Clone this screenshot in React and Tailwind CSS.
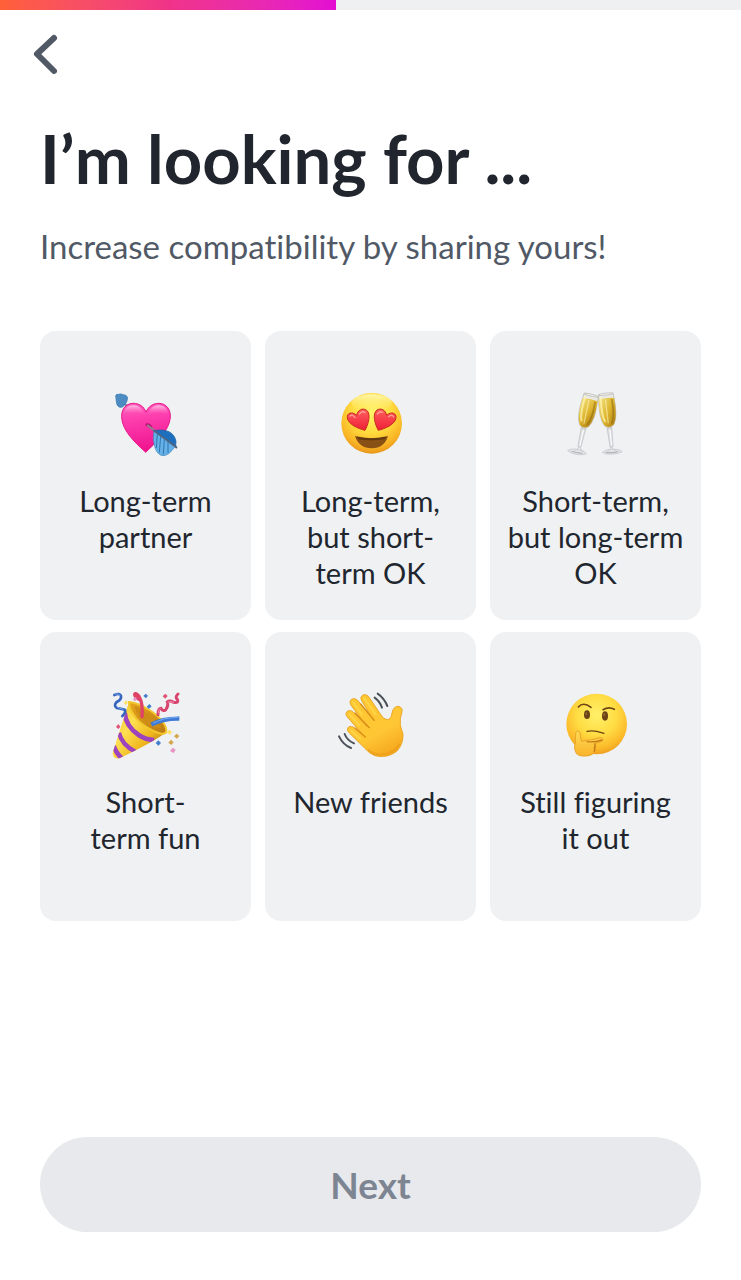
import { useState } from "react";

function HeartArrow() {
  return (
    <svg viewBox="4 0 270 270" className="size-[90px]" aria-hidden="true">
      <defs>
        <linearGradient id="ha-heart" x1="0" y1="0" x2="0.15" y2="1">
          <stop offset="0" stopColor="#ff62bd" />
          <stop offset="0.35" stopColor="#fd3fae" />
          <stop offset="1" stopColor="#f0148f" />
        </linearGradient>
        <linearGradient id="ha-shine" x1="0" y1="0" x2="0" y2="1">
          <stop offset="0" stopColor="#ffc4e6" stopOpacity="0.95" />
          <stop offset="1" stopColor="#ff5dbb" stopOpacity="0" />
        </linearGradient>
      </defs>
      <path d="M70 70 L86 84" stroke="#7d8797" strokeWidth="6" />
      <path d="M48 50 Q49 45 56 46 Q64 43 71 47 Q81 47 84 56 Q83 68 76 77 Q68 87 60 85 Q50 80 50 68 Z" fill="#4c8cc2" stroke="#3474ac" strokeWidth="2" />
      <path d="M138 220 C116 199 66 158 66 112 C66 84 84 73 101 73 C119 73 133 83 139 99 C146 83 160 73 177 73 C199 73 213 90 212 114 C210 156 164 195 138 220 Z" fill="url(#ha-heart)" stroke="#e81688" strokeWidth="3" />
      <path d="M73 108 C72 88 86 79 101 79 C117 79 128 89 134 106 Q104 92 73 108 Z M145 106 C151 88 162 79 177 79 C194 79 206 91 205 108 Q176 92 145 106 Z" fill="url(#ha-shine)" />
      <path d="M138 134 Q149 128 159 145 L151 149 Q148 139 138 141 Z" fill="#b30c6c" />
      <path d="M144 139 L230 205" stroke="#9a7991" strokeWidth="6" strokeLinecap="round" />
      <path d="M164 155 Q190 150 208 158 Q226 168 229 187 L228 202 Z" fill="#1e6fbd" stroke="#195d9f" strokeWidth="2" />
      <path d="M163 157 Q158 178 164 199 Q169 222 184 229 Q195 233 207 224 Q219 214 225 204 Z" fill="#65b1e8" stroke="#3e86bd" strokeWidth="2" />
      <path d="M173 165 L170 207 M183 172 L179 221 M194 180 L191 226 M205 188 L205 221" stroke="#2f77b1" strokeWidth="3" />
      <path d="M162 154 L226 201 L230 205" fill="none" stroke="#4b6684" strokeWidth="5" strokeLinecap="round" />
    </svg>
  );
}

function HeartEyes() {
  return (
    <svg viewBox="4 0 270 270" className="size-[90px]" aria-hidden="true">
      <defs>
        <radialGradient id="he-face" cx="0.5" cy="0.32" r="0.68">
          <stop offset="0" stopColor="#fff56a" />
          <stop offset="0.5" stopColor="#ffdb3e" />
          <stop offset="0.83" stopColor="#f9b425" />
          <stop offset="1" stopColor="#e8961a" />
        </radialGradient>
        <linearGradient id="he-heart" x1="0" y1="0" x2="0" y2="1">
          <stop offset="0" stopColor="#ff5f5c" />
          <stop offset="1" stopColor="#ee1f37" />
        </linearGradient>
        <linearGradient id="he-top" x1="0" y1="0" x2="0" y2="1">
          <stop offset="0" stopColor="#fff8b4" stopOpacity="0.9" />
          <stop offset="1" stopColor="#fff176" stopOpacity="0" />
        </linearGradient>
      </defs>
      <circle cx="141" cy="133" r="91" fill="url(#he-face)" />
      <ellipse cx="141" cy="72" rx="60" ry="26" fill="url(#he-top)" />
      <path d="M121 154 C100 149 71 136 68 117 C66 102 82 96 96 109 C99 93 113 86 125 93 C141 105 130 138 121 154 Z" fill="url(#he-heart)" stroke="#c92a1e" strokeWidth="3" />
      <path d="M161 154 C182 149 211 136 214 117 C216 102 200 96 186 109 C183 93 169 86 157 93 C141 105 152 138 161 154 Z" fill="url(#he-heart)" stroke="#c92a1e" strokeWidth="3" />
      <path d="M76 111 Q84 105 91 116 M104 105 Q113 94 121 101 M158 105 Q166 95 174 100 M192 113 Q202 105 207 114" fill="none" stroke="#ff9f92" strokeWidth="4" strokeLinecap="round" />
      <path d="M91 171 Q141 184 190 171 Q180 207 141 208 Q102 207 91 171 Z" fill="#885014" />
      <path d="M97 173 Q141 183 184 173 L181 180 Q141 187 101 181 Z" fill="#61380f" />
    </svg>
  );
}

function Flute({ transform }) {
  return (
    <g transform={transform}>
      <path d="M-22 -51 Q-30 20 -14 43 Q0 58 14 43 Q30 20 22 -51 Z" fill="#e8e9e5" stroke="#b9b7ae" strokeWidth="2" />
      <path d="M-23 -37 Q0 -41 23 -37 Q28 22 13 43 Q0 54 -13 43 Q-28 22 -23 -37 Z" fill="url(#fl-wine)" />
      <path d="M-16 -44 Q-21 12 -10 32" fill="none" stroke="#fff6b4" strokeWidth="6" opacity="0.7" />
      <path d="M16 -34 Q20 15 8 39" fill="none" stroke="#8b6810" strokeWidth="5" opacity="0.55" />
      <path d="M-3 -35 L-2 37" stroke="#fff9bb" strokeWidth="4" opacity="0.55" />
      <ellipse cx="0" cy="-51" rx="22" ry="3" fill="#f3f3ef" stroke="#b5b4ae" strokeWidth="2" />
      <path d="M-7 51 Q0 55 7 51 L5 108 L-4 108 Z" fill="#dfe1e3" stroke="#bcbec1" strokeWidth="2" />
      <path d="M1 56 L1 105" stroke="#fff" strokeWidth="3" />
    </g>
  );
}

function Glasses() {
  return (
    <svg viewBox="4 0 270 270" className="size-[90px]" aria-hidden="true">
      <defs>
        <linearGradient id="fl-wine" x1="0" y1="0" x2="1" y2="1">
          <stop offset="0" stopColor="#f3e283" />
          <stop offset="0.5" stopColor="#dfb62f" />
          <stop offset="1" stopColor="#a7740d" />
        </linearGradient>
      </defs>
      <path d="M54 214 Q65 207 86 211 Q109 217 110 225 Q98 230 78 226 Q57 221 54 214 Z" fill="#e1e3e5" stroke="#c3c5c8" strokeWidth="2" />
      <path d="M158 220 Q169 211 185 211 Q210 209 218 218 Q207 225 184 226 Q163 226 158 220 Z" fill="#e1e3e5" stroke="#c3c5c8" strokeWidth="2" />
      <path d="M66 217 Q80 222 98 223 M168 221 Q187 223 206 218" fill="none" stroke="#a9acaf" strokeWidth="3" />
      <Flute transform="translate(113 98) rotate(13)" />
      <Flute transform="translate(174 96) rotate(-6)" />
      <path d="M76 214 Q84 212 90 202 Q92 212 101 219 M174 217 Q183 211 184 203 Q189 213 200 214" fill="none" stroke="#c9cbce" strokeWidth="3" />
    </svg>
  );
}

function Popper() {
  return (
    <svg viewBox="4 0 270 270" className="size-[90px]" aria-hidden="true">
      <defs>
        <linearGradient id="pp-cone" x1="0" y1="0" x2="1" y2="0.8">
          <stop offset="0" stopColor="#eab51a" />
          <stop offset="0.4" stopColor="#ffe052" />
          <stop offset="0.72" stopColor="#efb51b" />
          <stop offset="1" stopColor="#aa7414" />
        </linearGradient>
        <linearGradient id="pp-in" x1="0" y1="0" x2="1" y2="1">
          <stop offset="0" stopColor="#e9a71c" />
          <stop offset="1" stopColor="#b97913" />
        </linearGradient>
        <clipPath id="pp-clip">
          <path d="M88 66 Q112 120 198 158 Q157 188 59 235 Q39 238 39 218 Z" />
        </clipPath>
      </defs>
      <path d="M88 66 Q112 120 198 158 Q157 188 59 235 Q39 238 39 218 Z" fill="url(#pp-cone)" />
      <g clipPath="url(#pp-clip)" fill="none" stroke="#9c43bd">
        <path d="M75 98 Q78 139 117 165 Q139 180 164 180" strokeWidth="14" />
        <path d="M58 158 Q66 194 107 215" strokeWidth="13" />
        <path d="M42 198 Q48 218 68 237" strokeWidth="14" />
      </g>
      <path d="M88 66 Q114 67 154 93 Q201 127 200 154 Q196 170 158 151 Q117 132 99 100 Q87 79 88 66 Z" fill="url(#pp-in)" stroke="#f3c82d" strokeWidth="6" />
      <path d="M105 78 Q139 87 184 144 Q155 143 125 116 Q107 98 105 78 Z" fill="#ce8d16" />
      <path d="M127 110 Q130 69 119 51 Q109 36 105 43 Q105 52 121 59" fill="none" stroke="#df4267" strokeWidth="10" strokeLinecap="round" />
      <path d="M155 134 Q190 115 239 116" fill="none" stroke="#3f7ad4" strokeWidth="13" />
      <path d="M160 130 Q190 113 236 112" fill="none" stroke="#73a9f0" strokeWidth="3" />
      <path d="M44 45 Q61 38 64 48 Q66 59 51 66 Q41 77 51 84 Q70 87 76 90 Q79 98 68 108" fill="none" stroke="#3564bd" strokeWidth="8" strokeLinecap="round" />
      <path d="M45 43 Q58 39 61 48 M51 80 Q60 86 72 88" fill="none" stroke="#72a3ea" strokeWidth="3" />
      <path d="M175 104 Q175 85 184 85 Q192 97 199 88 Q207 75 203 66 Q210 60 222 67 Q238 70 233 58 Q225 51 235 42" fill="none" stroke="#d9446f" strokeWidth="9" strokeLinecap="round" />
      <path d="M176 99 Q176 87 183 84 M204 67 Q214 63 223 67" fill="none" stroke="#f390af" strokeWidth="3" />
      <path d="M138 41 L145 47 L139 55 L131 48 Z M149 72 L156 79 L148 87 L141 80 Z M176 181 L184 189 L176 197 L168 189 Z" fill="#427fce" />
      <path d="M197 41 L204 48 L197 56 L189 49 Z M56 132 L62 140 L56 147 L49 141 Z" fill="#df5475" />
      <path d="M107 51 L112 57 L106 64 L99 58 Z M219 203 L228 209 L222 219 L211 213 Z" fill="#ea94c3" />
      <path d="M79 61 L85 67 L79 75 L72 69 Z M208 149 L217 155 L211 164 L201 158 Z" fill="#ffe16c" />
      <path d="M231 161 L239 168 L232 176 L223 169 Z M214 179 L222 187 L215 195 L206 188 Z" fill="#d4a64e" />
    </svg>
  );
}

function Wave() {
  return (
    <svg viewBox="4 0 270 270" className="size-[90px]" aria-hidden="true">
      <defs>
        <linearGradient id="wv-hand" x1="0.2" y1="0" x2="0.7" y2="1">
          <stop offset="0" stopColor="#ffc832" />
          <stop offset="0.65" stopColor="#ffc634" />
          <stop offset="1" stopColor="#f5a71d" />
        </linearGradient>
      </defs>
      <path d="M112 64 C102 49 118 36 132 50 L169 105 Q177 119 189 119 Q200 117 202 99 Q207 78 222 79 Q236 83 231 99 Q225 113 227 136 L235 163 Q236 193 216 214 Q187 236 151 227 Q133 220 119 203 L75 160 C62 148 70 133 87 142 L118 168 L68 111 C57 98 72 84 87 97 L127 140 L80 77 C69 61 84 49 99 61 L147 121 Z" fill="url(#wv-hand)" stroke="#eaa623" strokeWidth="3" strokeLinejoin="round" />
      <path d="M108 72 L149 121 M91 99 L134 143 M91 144 L122 171" stroke="#d98d16" strokeWidth="4" strokeLinecap="round" />
      <path d="M119 55 L153 103 M86 67 L112 104 M75 103 L103 135 M78 151 L107 176" stroke="#ffdb50" strokeWidth="6" strokeLinecap="round" opacity="0.7" />
      <path d="M130 209 Q151 228 182 222 Q211 216 225 191" fill="none" stroke="#e99818" strokeWidth="5" opacity="0.65" />
      <path d="M159 41 Q178 54 188 78 M150 53 Q166 65 172 83 M60 162 Q67 181 88 190 M43 169 Q55 194 79 204" fill="none" stroke="#4b5259" strokeWidth="6" strokeLinecap="round" />
    </svg>
  );
}

function Thinking() {
  return (
    <svg viewBox="4 0 270 270" className="size-[90px]" aria-hidden="true">
      <defs>
        <radialGradient id="th-face" cx="0.5" cy="0.35" r="0.66">
          <stop offset="0" stopColor="#fff06a" />
          <stop offset="0.5" stopColor="#ffdc43" />
          <stop offset="0.84" stopColor="#fbb929" />
          <stop offset="1" stopColor="#ed9b20" />
        </radialGradient>
        <linearGradient id="th-hand" x1="0" y1="0" x2="0" y2="1">
          <stop offset="0" stopColor="#ffdc57" />
          <stop offset="1" stopColor="#f9b329" />
        </linearGradient>
      </defs>
      <circle cx="141" cy="132" r="91" fill="url(#th-face)" />
      <ellipse cx="112" cy="104" rx="9" ry="13" fill="#6b4216" />
      <ellipse cx="166" cy="108" rx="9" ry="14" fill="#6b4216" />
      <ellipse cx="110" cy="101" rx="3" ry="5" fill="#936226" />
      <ellipse cx="164" cy="104" rx="3" ry="5" fill="#936226" />
      <path d="M86 81 Q101 64 124 82 M160 89 Q177 79 194 88" fill="none" stroke="#6e4512" strokeWidth="5" strokeLinecap="round" />
      <path d="M112 154 Q127 151 141 154 Q153 157 163 160" fill="none" stroke="#6e4512" strokeWidth="4" strokeLinecap="round" />
      <path d="M78 163 Q79 151 87 153 Q94 157 92 170 L96 184 Q107 180 126 179 L151 173 Q162 174 159 182 Q152 187 136 190 L137 196 Q139 202 135 207 L135 213 Q132 226 110 228 Q81 230 77 214 Q72 202 77 188 Z" fill="url(#th-hand)" stroke="#e9a32a" strokeWidth="3" strokeLinejoin="round" />
      <path d="M112 185 Q134 188 157 180" fill="none" stroke="#c67a17" strokeWidth="4" strokeLinecap="round" />
      <path d="M135 192 Q139 198 134 203 Q137 209 133 214" fill="none" stroke="#c67a17" strokeWidth="4" strokeLinecap="round" />
    </svg>
  );
}

const OPTIONS = [
  { id: "long", Icon: HeartArrow, lines: ["Long-term", "partner"] },
  { id: "long-open", Icon: HeartEyes, lines: ["Long-term,", "but short-", "term OK"] },
  { id: "short-open", Icon: Glasses, lines: ["Short-term,", "but long-term", "OK"] },
  { id: "short", Icon: Popper, lines: ["Short-", "term fun"] },
  { id: "friends", Icon: Wave, lines: ["New friends"] },
  { id: "unsure", Icon: Thinking, lines: ["Still figuring", "it out"] },
];

export default function App() {
  const [selected, setSelected] = useState(null);

  return (
    <div className="flex min-h-screen flex-col bg-white font-['Lato',sans-serif] text-[#21262e] [font-variant-ligatures:none]">
      <div
        role="progressbar"
        aria-label="Profile progress"
        aria-valuenow={45}
        aria-valuemin={0}
        aria-valuemax={100}
        className="h-[10px] bg-[#eff0f2]"
      >
        <div className="h-full w-[45.4%] bg-linear-to-r from-[#ff6036] via-[#f03388] to-[#e30bd2]" />
      </div>

      <header className="flex px-6 pt-5">
        <button type="button" aria-label="Back" className="flex h-12 w-12 items-center">
          <svg viewBox="0 0 48 48" className="size-12" fill="none" stroke="#505965" strokeWidth="6" strokeLinecap="round" strokeLinejoin="round" aria-hidden="true">
            <path d="M30 8 L13 24 L30 41" />
          </svg>
        </button>
      </header>

      <main className="flex grow flex-col px-10 pb-12">
        <h1 className="pt-11 text-[67px] leading-[72px] font-bold">I’m looking for ...</h1>
        <p className="mt-8 text-[33px] leading-10 text-[#505965]">Increase compatibility by sharing yours!</p>

        <div className="mt-[65px] grid grid-cols-3 gap-x-[14px] gap-y-3">
          {OPTIONS.map(({ id, Icon, lines }) => (
            <button
              key={id}
              type="button"
              aria-pressed={selected === id}
              onClick={() => setSelected(selected === id ? null : id)}
              className="flex min-h-[289px] flex-col items-center rounded-2xl bg-[#eff1f3] pt-12 pb-6 aria-pressed:ring-4 aria-pressed:ring-[#f03388]"
            >
              <Icon />
              <span className="mt-[14px] text-center text-[29px] leading-9">
                {lines.map((line) => (
                  <span key={line} className="block">{line}</span>
                ))}
              </span>
            </button>
          ))}
        </div>

        <button
          type="button"
          disabled={!selected}
          className="mt-auto h-[95px] rounded-full bg-linear-to-r from-[#ff6036] to-[#e30bd2] text-[37px] font-bold text-white disabled:bg-[#e8e9ed] disabled:bg-none disabled:text-[#7c8591]"
        >
          Next
        </button>
      </main>
    </div>
  );
}
